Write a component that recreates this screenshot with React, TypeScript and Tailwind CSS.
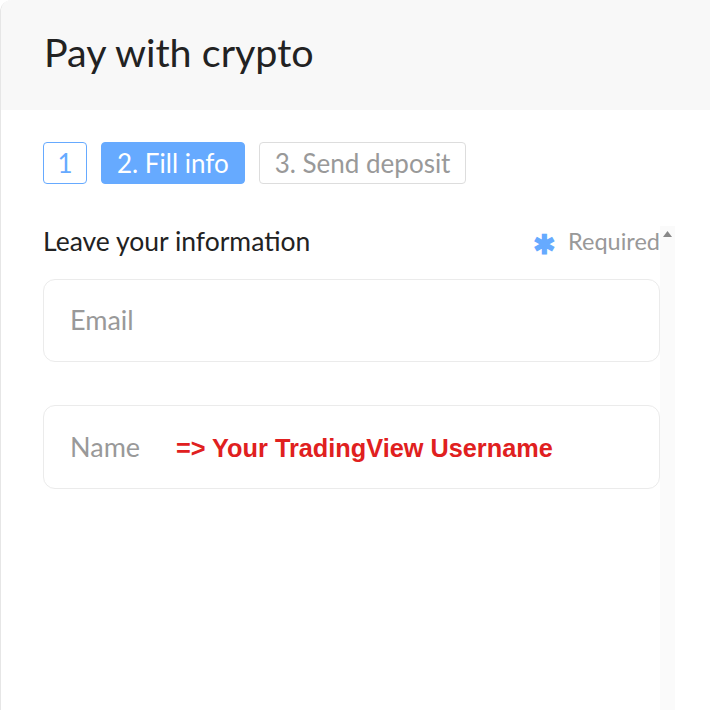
import React from 'react';

const steps = [
  { label: '1', state: 'done' },
  { label: '2. Fill info', state: 'active' },
  { label: '3. Send deposit', state: 'todo' },
];

const stepClass: Record<string, string> = {
  done: 'w-[44px] justify-center border border-[#66aaff] text-[#66aaff] bg-white',
  active: 'px-[15px] border border-[#66aaff] bg-[#66aaff] text-white',
  todo: 'px-[15px] border border-[#dddddd] text-[#999999] bg-white',
};

export default function App() {
  return (
    <div
      className="w-[710px] h-[710px] bg-white border-l border-[#e6e6e6] rounded-tl-xl overflow-hidden flex flex-col"
      style={{ fontFamily: 'Lato, "Noto Sans", sans-serif' }}
    >
      {/* header */}
      <div className="h-[110px] shrink-0 bg-[#f8f8f8] flex items-center pl-[43px]">
        <h1 className="text-[39.5px] leading-none text-[#222222] pb-[6px]">Pay with crypto</h1>
      </div>

      <div className="flex-1 flex flex-col pl-[42px] pt-[32px] min-h-0">
        {/* steps */}
        <div className="flex gap-[14px] h-[42px]">
          {steps.map((s) => (
            <div
              key={s.label}
              className={`h-[42px] rounded-[4px] flex items-center text-[26px] ${stepClass[s.state]}`}
            >
              {s.label}
            </div>
          ))}
        </div>

        {/* scroll area */}
        <div className="mt-[42px] w-[632px] flex-1 flex min-h-0">
          <div className="flex-1 flex flex-col">
            <div className="h-[32px] flex items-center justify-between">
              <span className="text-[26.5px] text-[#222222]">Leave your information</span>
              <span className="flex items-center text-[23.5px] text-[#999999]">
                <span className="text-[#66aaff] text-[27px] leading-none font-bold mr-[12px] pt-[2px]">✱</span>
                Required
              </span>
            </div>

            <div className="mt-[21px] h-[83px] rounded-[12px] border border-[#ebebeb] flex items-center pl-[26px]">
              <span className="text-[27px] text-[#999999]">Email</span>
            </div>

            <div className="mt-[43px] h-[84px] rounded-[12px] border border-[#ebebeb] flex items-center pl-[26px]">
              <span className="text-[27px] text-[#999999] w-[106px]">Name</span>
              <span
                className="text-[25.3px] font-bold text-[#e02020] pt-[4px]"
                style={{ fontFamily: '"Liberation Sans", Arial, sans-serif' }}
              >
                =&gt; Your TradingView Username
              </span>
            </div>
          </div>

          {/* scrollbar */}
          <div className="w-[15px] shrink-0 bg-[#fafafa] flex justify-center pt-[5px]">
            <svg width="9" height="6" viewBox="0 0 9 6">
              <path d="M4.5 0 L9 6 L0 6 Z" fill="#888888" />
            </svg>
          </div>
        </div>
      </div>
    </div>
  );
}
